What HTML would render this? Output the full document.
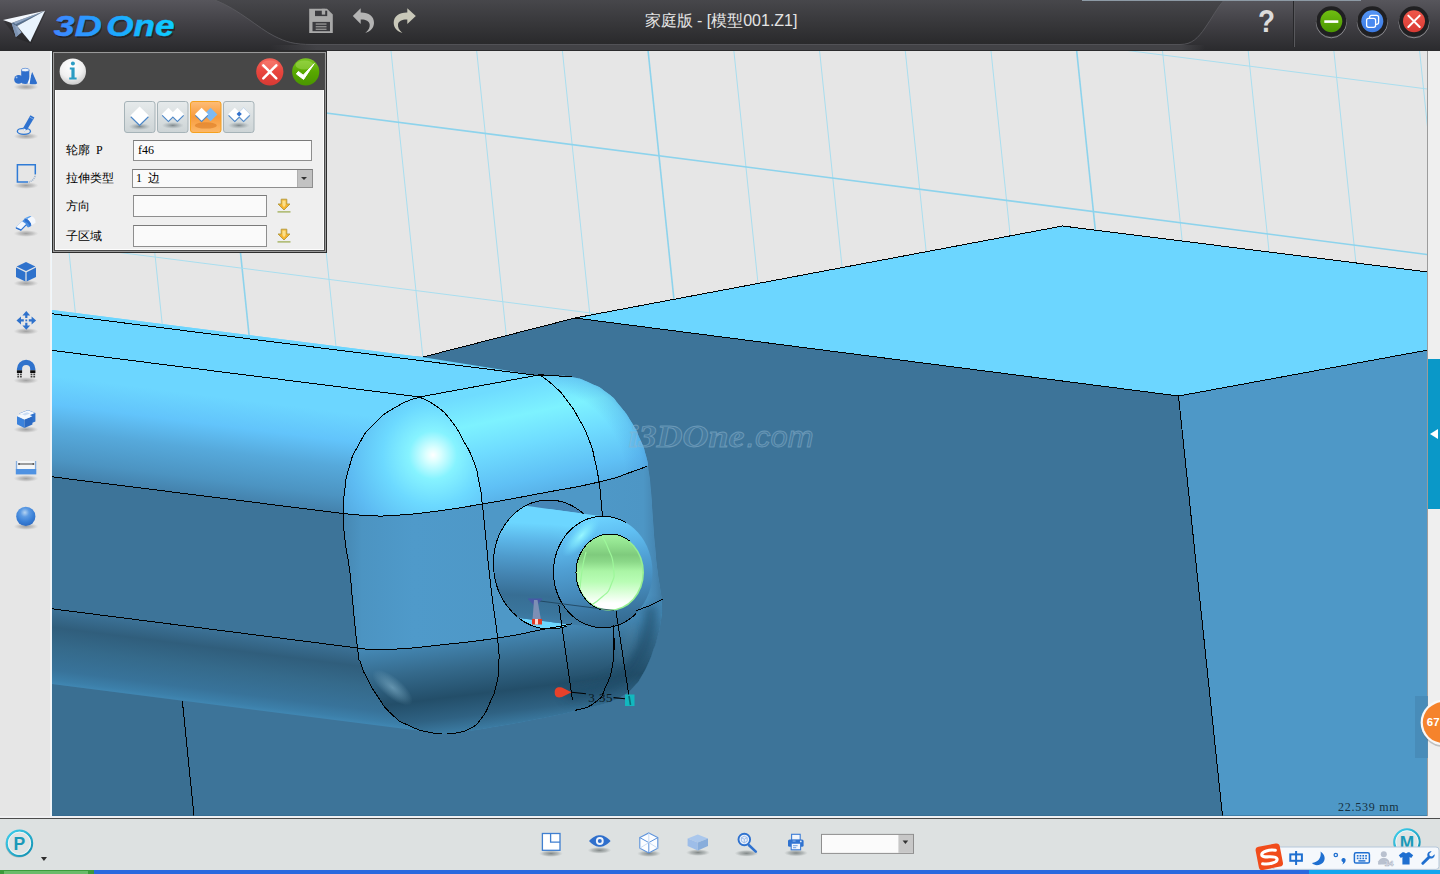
<!DOCTYPE html>
<html lang="zh">
<head>
<meta charset="utf-8">
<title>3D One</title>
<style>
*{box-sizing:border-box;margin:0;padding:0}
html,body{width:1440px;height:874px;overflow:hidden;background:#e6e6e6;font-family:"Liberation Sans",sans-serif;}
#app{position:relative;width:1440px;height:874px;overflow:hidden;background:#e6e6e6}
.abs{position:absolute}
#titlebar{position:absolute;left:0;top:0;width:1440px;height:51px}
#title{position:absolute;left:1px;top:10px;width:1440px;text-align:center;color:#e4e4e4;font-size:16px;line-height:22px;letter-spacing:0px}
#sidebar{position:absolute;left:0;top:51px;width:52px;height:766px;background:#e6e6e6}
#canvas{position:absolute;left:52px;top:51px;width:1375px;height:765px;background:#e6e6e6;overflow:hidden}
#rightstrip{position:absolute;left:1427px;top:51px;width:13px;height:767px;background:#efefef;border-left:1px solid #9c9c9c}
#bottombar{position:absolute;left:0;top:818px;width:1440px;height:52px;background:#dde1e1;border-top:1px solid #4c4c4c}
#botgap{position:absolute;left:0;top:816px;width:1428px;height:2px;background:#f0f0f2}
#taskbar{position:absolute;left:0;top:870px;width:1440px;height:4px;background:#2a69df}
/* panel */
#panel{position:absolute;left:55px;top:54px;width:269px;height:196px;background:#efefef;box-shadow:0 0 0 1px #4a4a4a,0 0 0 2px #9a9a9a,0 0 0 3px #2e2e2e,inset 0 0 0 1px #fdfdfd}
#panelhead{position:absolute;left:0;top:0;width:269px;height:36px;background:#474747}
#pin{position:absolute;left:1px;top:1px;width:268px;height:195px}
.lbl{position:absolute;left:10px;font-size:12px;color:#000;line-height:14px;font-family:"Liberation Serif",serif;word-spacing:3px;white-space:nowrap}
.inp{position:absolute;background:#fafafa;border:1px solid #8e8e8e;border-top-color:#7a7a7a;font-size:12px;line-height:18px;padding-left:4px;color:#000;font-family:"Liberation Serif",serif;word-spacing:3px;white-space:nowrap}
</style>
</head>
<body>
<div id="app">

<!-- ===================== 3D CANVAS ===================== -->
<div id="canvas">
<svg id="scene" width="1376" height="765" viewBox="52 51 1376 765">
<defs>
<linearGradient id="gBar" gradientUnits="userSpaceOnUse" x1="52" y1="350" x2="36" y2="477">
<stop offset="0" stop-color="#6cd6ff"/><stop offset=".2" stop-color="#6cd6ff"/><stop offset=".42" stop-color="#62c4fb"/><stop offset=".62" stop-color="#56a9db"/><stop offset=".85" stop-color="#4c94c2"/><stop offset="1" stop-color="#437fa9"/></linearGradient>
<linearGradient id="gBarLow" gradientUnits="userSpaceOnUse" x1="52" y1="609" x2="42.5" y2="684">
<stop offset="0" stop-color="#3c7297"/><stop offset=".24" stop-color="#305e7c"/><stop offset=".5" stop-color="#356a8b"/><stop offset=".8" stop-color="#38739a"/><stop offset=".93" stop-color="#3c7fa9"/><stop offset="1" stop-color="#4189b5"/></linearGradient>
<radialGradient id="gSph" gradientUnits="userSpaceOnUse" cx="433" cy="455" r="120">
<stop offset="0" stop-color="#ffffff"/><stop offset=".06" stop-color="#dcffff"/><stop offset=".2" stop-color="#86f3ff"/><stop offset=".42" stop-color="#6cd9ff"/><stop offset=".7" stop-color="#5dbbf2"/><stop offset="1" stop-color="#4f9fd6"/></radialGradient>
<linearGradient id="gCyl" gradientUnits="userSpaceOnUse" x1="520" y1="385" x2="545" y2="500">
<stop offset="0" stop-color="#6fdcff"/><stop offset=".25" stop-color="#7df2ff"/><stop offset=".5" stop-color="#6fdcff"/><stop offset=".8" stop-color="#5fc0f5"/><stop offset="1" stop-color="#55abe2"/></linearGradient>
<radialGradient id="gCor" gradientUnits="userSpaceOnUse" cx="560" cy="470" r="105">
<stop offset="0" stop-color="#6fdcff"/><stop offset=".55" stop-color="#69d2ff"/><stop offset=".8" stop-color="#5cb9ee"/><stop offset="1" stop-color="#4f9fd6"/></radialGradient>
<linearGradient id="gLowL" gradientUnits="userSpaceOnUse" x1="343" y1="0" x2="500" y2="0">
<stop offset="0" stop-color="#4687b2"/><stop offset=".12" stop-color="#4c94c2"/><stop offset=".45" stop-color="#4f9aca"/><stop offset="1" stop-color="#4e98c7"/></linearGradient>
<linearGradient id="gLowR" gradientUnits="userSpaceOnUse" x1="600" y1="0" x2="662" y2="0">
<stop offset="0" stop-color="#4e98c7"/><stop offset=".7" stop-color="#4d96c5"/><stop offset=".9" stop-color="#4686b2"/><stop offset="1" stop-color="#3f7aa2"/></linearGradient>
<linearGradient id="gBot" gradientUnits="userSpaceOnUse" x1="520" y1="632" x2="531" y2="722">
<stop offset="0" stop-color="#4487b3"/><stop offset=".3" stop-color="#356a8c"/><stop offset=".62" stop-color="#234e69"/><stop offset=".85" stop-color="#2f6283"/><stop offset="1" stop-color="#3b7aa1"/></linearGradient>
<linearGradient id="gBoss" gradientUnits="userSpaceOnUse" x1="560" y1="508" x2="548" y2="628">
<stop offset="0" stop-color="#6cd6ff"/><stop offset=".14" stop-color="#6cd6ff"/><stop offset=".28" stop-color="#5cb6e8"/><stop offset=".42" stop-color="#4f9ccd"/><stop offset=".58" stop-color="#4383b0"/><stop offset=".74" stop-color="#376e94"/><stop offset=".88" stop-color="#3a759c"/><stop offset="1" stop-color="#4282ae"/></linearGradient>
<linearGradient id="gRing" gradientUnits="userSpaceOnUse" x1="595" y1="516" x2="612" y2="628">
<stop offset="0" stop-color="#6ed4ff"/><stop offset=".18" stop-color="#60bff2"/><stop offset=".42" stop-color="#50a0d4"/><stop offset=".68" stop-color="#4488b8"/><stop offset=".88" stop-color="#39739c"/><stop offset="1" stop-color="#33688d"/></linearGradient>
<radialGradient id="gRingH" gradientUnits="userSpaceOnUse" cx="0" cy="0" r="1">
<stop offset="0" stop-color="#9afaff" stop-opacity=".95"/><stop offset=".5" stop-color="#7fe9ff" stop-opacity=".6"/><stop offset="1" stop-color="#6cd6ff" stop-opacity="0"/></radialGradient>
<linearGradient id="gGreen" gradientUnits="userSpaceOnUse" x1="0" y1="534" x2="0" y2="611">
<stop offset="0" stop-color="#a4f2a0"/><stop offset=".12" stop-color="#93e390"/><stop offset=".27" stop-color="#7fcb7d"/><stop offset=".36" stop-color="#8bd888"/><stop offset=".48" stop-color="#aaf5a5"/><stop offset=".62" stop-color="#b9fdb5"/><stop offset=".8" stop-color="#e6ffe4"/><stop offset=".9" stop-color="#ffffff"/><stop offset="1" stop-color="#ffffff"/></linearGradient>
<radialGradient id="gHl2" gradientUnits="userSpaceOnUse" cx="0" cy="0" r="1">
<stop offset="0" stop-color="#7aa9c2" stop-opacity=".7"/><stop offset="1" stop-color="#7fb0c8" stop-opacity="0"/></radialGradient>
<radialGradient id="gCorD" gradientUnits="userSpaceOnUse" cx="535" cy="478" r="122">
<stop offset="0" stop-color="#4a98da" stop-opacity="0"/><stop offset=".74" stop-color="#4a98da" stop-opacity="0"/><stop offset=".88" stop-color="#4a98da" stop-opacity=".3"/><stop offset="1" stop-color="#4690cc" stop-opacity=".8"/></radialGradient>
<filter id="bl1" x="-20%" y="-20%" width="140%" height="140%"><feGaussianBlur stdDeviation="1.2"/></filter>
<filter id="bl5" x="-50%" y="-50%" width="200%" height="200%"><feGaussianBlur stdDeviation="5"/></filter>
<filter id="bl3" x="-20%" y="-20%" width="140%" height="140%"><feGaussianBlur stdDeviation="3"/></filter>
</defs>
<rect x="52" y="51" width="1376" height="765" fill="#e6e6e6"/>
<g><line x1="48.1" y1="51" x2="86.5" y2="420" stroke="#a9deef" stroke-width="1"/><line x1="133.8" y1="51" x2="172.2" y2="420" stroke="#a9deef" stroke-width="1"/><line x1="219.5" y1="51" x2="257.9" y2="420" stroke="#8dd3ec" stroke-width="1.6"/><line x1="305.3" y1="51" x2="343.6" y2="420" stroke="#a9deef" stroke-width="1"/><line x1="391.0" y1="51" x2="429.4" y2="420" stroke="#a9deef" stroke-width="1"/><line x1="476.7" y1="51" x2="515.1" y2="420" stroke="#a9deef" stroke-width="1"/><line x1="562.4" y1="51" x2="600.8" y2="420" stroke="#a9deef" stroke-width="1"/><line x1="648.1" y1="51" x2="686.5" y2="420" stroke="#8dd3ec" stroke-width="1.6"/><line x1="733.9" y1="51" x2="772.2" y2="420" stroke="#a9deef" stroke-width="1"/><line x1="819.6" y1="51" x2="858.0" y2="420" stroke="#a9deef" stroke-width="1"/><line x1="905.3" y1="51" x2="943.7" y2="420" stroke="#a9deef" stroke-width="1"/><line x1="991.0" y1="51" x2="1029.4" y2="420" stroke="#a9deef" stroke-width="1"/><line x1="1076.7" y1="51" x2="1115.1" y2="420" stroke="#8dd3ec" stroke-width="1.6"/><line x1="1162.5" y1="51" x2="1200.8" y2="420" stroke="#a9deef" stroke-width="1"/><line x1="1248.2" y1="51" x2="1286.6" y2="420" stroke="#a9deef" stroke-width="1"/><line x1="1333.9" y1="51" x2="1372.3" y2="420" stroke="#a9deef" stroke-width="1"/><line x1="1419.6" y1="51" x2="1458.0" y2="420" stroke="#a9deef" stroke-width="1"/><line x1="52" y1="-87.7" x2="1428" y2="89.1" stroke="#a9deef" stroke-width="1"/><line x1="52" y1="77.8" x2="1428" y2="254.6" stroke="#8dd3ec" stroke-width="1.6"/><line x1="52" y1="243.8" x2="1428" y2="420.6" stroke="#a9deef" stroke-width="1"/></g>
<polygon points="575.0,318.0 1062.5,226.0 1428.0,272.0 1428.0,350.0 1178.5,396.0" fill="#6cd6ff"/>
<polygon points="423.0,357.0 575.0,318.0 1178.5,396.0 1222.5,816.0 52.0,816.0 52.0,330.0" fill="#3d7499"/>
<polygon points="1178.5,396.0 1428.0,350.0 1428.0,816.0 1222.5,816.0" fill="#4e98c7"/>
<polygon points="52,684 182.4,701 194,816 52,816" fill="#3a6f92"/>
<polygon points="52.0,310.0 423.0,357.3 537.0,375.4 540.0,375.0 419.4,397.0 52.0,350.4" fill="#6cd6ff"/>
<path d="M52,350.4 L419.4,397 C411.6,400.3 411.1,398.0 396.0,407.0 C380.9,416.0 386.7,411.0 374.0,424.0 C361.3,437.0 366.3,431.3 358.0,446.0 C349.7,460.7 353.4,453.3 349.0,468.0 C344.6,482.7 346.6,474.8 344.8,490.0 C343.0,505.2 343.9,505.7 343.5,513.6 L52,476.8 Z" fill="url(#gBar)"/>
<path d="M52,476.8 L343.5,513.6 C344.0,522.4 343.0,521.2 345.0,540.0 C347.0,558.8 347.1,550.0 349.6,570.0 C352.1,590.0 349.9,574.0 352.5,600.0 C355.1,626.0 355.8,632.0 357.5,648.0 L52,608.8 Z" fill="#3d7499"/>
<path d="M52,608.8 L357.5,648 C358.7,653.3 357.7,653.7 361.0,664.0 C364.3,674.3 361.8,668.0 367.5,679.0 C373.2,690.0 369.7,685.0 378.0,697.0 C386.3,709.0 381.8,705.3 392.5,715.0 C403.2,724.7 398.2,720.3 410.0,726.0 C421.8,731.7 417.5,729.5 428.0,732.0 C438.5,734.5 437.0,733.1 441.5,733.6 L52,684.0 Z" fill="url(#gBarLow)"/>
<clipPath id="capclip"><path d="M419.4,397.0 C411.6,400.3 411.1,398.0 396.0,407.0 C380.9,416.0 386.7,411.0 374.0,424.0 C361.3,437.0 366.3,431.3 358.0,446.0 C349.7,460.7 353.4,453.3 349.0,468.0 C344.6,482.7 346.6,474.8 344.8,490.0 C343.0,505.2 343.4,496.9 343.5,513.6 C343.6,530.3 343.0,521.2 345.0,540.0 C347.0,558.8 347.1,550.0 349.6,570.0 C352.1,590.0 349.9,574.0 352.5,600.0 C355.1,626.0 354.7,626.7 357.5,648.0 C360.3,669.3 357.7,653.7 361.0,664.0 C364.3,674.3 361.8,668.0 367.5,679.0 C373.2,690.0 369.7,685.0 378.0,697.0 C386.3,709.0 381.8,705.3 392.5,715.0 C403.2,724.7 398.2,720.3 410.0,726.0 C421.8,731.7 417.5,729.5 428.0,732.0 C438.5,734.5 437.0,733.1 441.5,733.6 C447.7,733.1 449.5,733.1 460.0,732.0 C470.5,730.9 463.0,731.8 473.0,730.4 C483.0,729.0 477.7,729.7 490.0,727.7 C502.3,725.7 496.7,726.7 510.0,724.3 C523.3,721.9 515.7,723.3 530.0,720.5 C544.3,717.7 537.7,719.2 553.0,716.0 C568.3,712.8 560.3,714.5 576.0,710.8 C591.7,707.1 588.3,708.1 600.0,705.0 C611.7,701.9 603.2,704.7 611.0,701.5 C618.8,698.3 615.6,700.5 623.3,695.5 C631.0,690.5 627.8,693.2 634.0,686.5 C640.2,679.8 636.9,683.9 642.0,675.4 C647.1,666.9 645.6,669.1 649.3,661.0 C653.0,652.9 650.5,658.0 653.0,651.0 C655.5,644.0 654.2,649.7 656.8,640.0 C659.4,630.3 659.1,633.8 660.8,622.0 C662.5,610.2 662.1,615.2 662.0,604.5 C661.9,593.8 662.0,601.5 660.5,590.0 C659.0,578.5 659.3,585.0 657.5,570.0 C655.7,555.0 656.5,561.7 655.0,545.0 C653.5,528.3 654.3,538.0 653.0,520.0 C651.7,502.0 652.3,506.7 651.0,491.0 C649.7,475.3 650.7,484.8 649.0,473.0 C647.3,461.2 649.0,467.0 646.0,455.7 C643.0,444.4 644.7,449.9 640.0,439.0 C635.3,428.1 638.7,434.0 632.0,423.0 C625.3,412.0 628.3,416.1 620.0,406.0 C611.7,395.9 617.0,400.5 607.0,392.8 C597.0,385.1 601.8,388.3 590.0,383.0 C578.2,377.7 583.4,379.4 571.7,377.0 C560.0,374.6 566.6,376.3 555.0,375.8 C543.4,375.3 543.0,375.5 537.0,375.4 L540,375 L419.4,397 Z"/></clipPath>
<g clip-path="url(#capclip)">
<path d="M419.4,397.0 C411.6,400.3 411.1,398.0 396.0,407.0 C380.9,416.0 386.7,411.0 374.0,424.0 C361.3,437.0 366.3,431.3 358.0,446.0 C349.7,460.7 353.4,453.3 349.0,468.0 C344.6,482.7 346.6,474.8 344.8,490.0 C343.0,505.2 343.4,496.9 343.5,513.6 C343.6,530.3 343.0,521.2 345.0,540.0 C347.0,558.8 347.1,550.0 349.6,570.0 C352.1,590.0 349.9,574.0 352.5,600.0 C355.1,626.0 354.7,626.7 357.5,648.0 C360.3,669.3 357.7,653.7 361.0,664.0 C364.3,674.3 361.8,668.0 367.5,679.0 C373.2,690.0 369.7,685.0 378.0,697.0 C386.3,709.0 381.8,705.3 392.5,715.0 C403.2,724.7 398.2,720.3 410.0,726.0 C421.8,731.7 417.5,729.5 428.0,732.0 C438.5,734.5 437.0,733.1 441.5,733.6 C447.7,733.1 449.5,733.1 460.0,732.0 C470.5,730.9 463.0,731.8 473.0,730.4 C483.0,729.0 477.7,729.7 490.0,727.7 C502.3,725.7 496.7,726.7 510.0,724.3 C523.3,721.9 515.7,723.3 530.0,720.5 C544.3,717.7 537.7,719.2 553.0,716.0 C568.3,712.8 560.3,714.5 576.0,710.8 C591.7,707.1 588.3,708.1 600.0,705.0 C611.7,701.9 603.2,704.7 611.0,701.5 C618.8,698.3 615.6,700.5 623.3,695.5 C631.0,690.5 627.8,693.2 634.0,686.5 C640.2,679.8 636.9,683.9 642.0,675.4 C647.1,666.9 645.6,669.1 649.3,661.0 C653.0,652.9 650.5,658.0 653.0,651.0 C655.5,644.0 654.2,649.7 656.8,640.0 C659.4,630.3 659.1,633.8 660.8,622.0 C662.5,610.2 662.1,615.2 662.0,604.5 C661.9,593.8 662.0,601.5 660.5,590.0 C659.0,578.5 659.3,585.0 657.5,570.0 C655.7,555.0 656.5,561.7 655.0,545.0 C653.5,528.3 654.3,538.0 653.0,520.0 C651.7,502.0 652.3,506.7 651.0,491.0 C649.7,475.3 650.7,484.8 649.0,473.0 C647.3,461.2 649.0,467.0 646.0,455.7 C643.0,444.4 644.7,449.9 640.0,439.0 C635.3,428.1 638.7,434.0 632.0,423.0 C625.3,412.0 628.3,416.1 620.0,406.0 C611.7,395.9 617.0,400.5 607.0,392.8 C597.0,385.1 601.8,388.3 590.0,383.0 C578.2,377.7 583.4,379.4 571.7,377.0 C560.0,374.6 566.6,376.3 555.0,375.8 C543.4,375.3 543.0,375.5 537.0,375.4 L540,375 L419.4,397 Z" fill="#4e98c7"/>
<path d="M419.4,397.0 C411.6,400.3 411.1,398.0 396.0,407.0 C380.9,416.0 386.7,411.0 374.0,424.0 C361.3,437.0 366.3,431.3 358.0,446.0 C349.7,460.7 353.4,453.3 349.0,468.0 C344.6,482.7 346.6,474.8 344.8,490.0 C343.0,505.2 343.9,505.7 343.5,513.6 C352.3,514.3 353.5,515.0 370.0,515.6 C386.5,516.2 373.0,516.6 393.0,515.4 C413.0,514.2 400.2,515.8 430.0,512.0 C459.8,508.2 464.9,506.7 482.3,504.0 C481.2,496.7 481.9,496.3 479.0,482.0 C476.1,467.7 478.8,475.0 473.5,461.0 C468.2,447.0 470.5,453.5 463.0,440.0 C455.5,426.5 460.0,431.8 451.0,420.5 C442.0,409.2 446.5,413.8 436.0,406.0 C425.5,398.2 424.9,400.0 419.4,397.0 Z" fill="url(#gSph)"/>
<path d="M419.4,397.0 C424.9,400.0 425.5,398.2 436.0,406.0 C446.5,413.8 442.0,409.2 451.0,420.5 C460.0,431.8 455.5,426.5 463.0,440.0 C470.5,453.5 468.2,447.0 473.5,461.0 C478.8,475.0 476.1,467.7 479.0,482.0 C481.9,496.3 481.2,496.7 482.3,504.0 C501.5,500.5 501.1,500.8 540.0,493.5 C578.9,486.2 579.3,485.8 599.0,482.0 C597.7,475.0 598.2,474.8 595.0,461.0 C591.8,447.2 594.6,454.6 589.3,440.6 C584.0,426.6 586.5,432.5 579.0,419.0 C571.5,405.5 575.0,411.0 566.7,400.0 C558.4,389.0 562.9,394.3 554.0,386.0 C545.1,377.7 544.7,378.7 540.0,375.0 L419.4,397 Z" fill="url(#gCyl)"/>
<path d="M540.0,375.0 C544.7,378.7 545.1,377.7 554.0,386.0 C562.9,394.3 558.4,389.0 566.7,400.0 C575.0,411.0 571.5,405.5 579.0,419.0 C586.5,432.5 584.0,426.6 589.3,440.6 C594.6,454.6 591.8,447.2 595.0,461.0 C598.2,474.8 597.7,475.0 599.0,482.0 C609.3,478.8 614.0,477.8 630.0,472.5 C646.0,467.2 641.3,468.2 647.0,466.0 L670,460 L670,370 L537,370 Z" fill="url(#gCyl)"/>
<path d="M540.0,375.0 C544.7,378.7 545.1,377.7 554.0,386.0 C562.9,394.3 558.4,389.0 566.7,400.0 C575.0,411.0 571.5,405.5 579.0,419.0 C586.5,432.5 584.0,426.6 589.3,440.6 C594.6,454.6 591.8,447.2 595.0,461.0 C598.2,474.8 597.7,475.0 599.0,482.0 C609.3,478.8 614.0,477.8 630.0,472.5 C646.0,467.2 641.3,468.2 647.0,466.0 L670,460 L670,370 L537,370 Z" fill="url(#gCorD)"/>
<path d="M343.5,513.6 C352.3,514.3 353.5,515.0 370.0,515.6 C386.5,516.2 373.0,516.6 393.0,515.4 C413.0,514.2 400.2,515.8 430.0,512.0 C459.8,508.2 464.9,506.7 482.3,504.0 C483.5,516.0 483.8,518.0 486.0,540.0 C488.2,562.0 486.8,550.0 489.0,570.0 C491.2,590.0 489.7,577.3 492.5,600.0 C495.3,622.7 495.8,625.3 497.5,638.0 C478.3,640.3 473.3,641.3 440.0,645.0 C406.7,648.7 419.2,647.5 397.5,649.0 C375.8,650.5 388.3,649.9 375.0,649.6 C361.7,649.3 363.3,648.5 357.5,648.0 C355.8,632.0 355.1,626.0 352.5,600.0 C349.9,574.0 352.1,590.0 349.6,570.0 C347.1,550.0 347.0,558.8 345.0,540.0 C343.0,521.2 344.0,522.4 343.5,513.6 Z" fill="url(#gLowL)"/>
<path d="M599,482 C609.3,478.8 614.0,477.8 630.0,472.5 C646.0,467.2 641.3,468.2 647.0,466.0 L670,460 L670,612 L636,611 L620,560 Z" fill="url(#gLowR)"/>
<path d="M357.5,648.0 C363.3,648.5 361.7,649.3 375.0,649.6 C388.3,649.9 375.8,650.5 397.5,649.0 C419.2,647.5 406.7,648.7 440.0,645.0 C473.3,641.3 464.2,643.0 497.5,638.0 C530.8,633.0 515.0,634.8 540.0,630.0 C565.0,625.2 561.7,625.8 572.5,623.8 L590,627 L636.3,610.7 L662.6,599 L680,600 L680,760 L340,760 L340,640 Z" fill="url(#gBot)"/>
<path d="M651.0,612.0 C650.0,618.7 651.3,618.7 648.0,632.0 C644.7,645.3 647.0,639.7 641.0,652.0 C635.0,664.3 639.0,659.0 630.0,669.0 C621.0,679.0 626.0,675.0 614.0,682.0 C602.0,689.0 608.7,686.0 594.0,690.0 C579.3,694.0 578.0,692.7 570.0,694.0" fill="none" stroke="#1f4965" stroke-width="13" stroke-linecap="round" opacity=".6" filter="url(#bl5)"/>
<path d="M632.0,628.0 C631.0,633.7 632.7,634.3 629.0,645.0 C625.3,655.7 623.7,655.0 621.0,660.0" fill="none" stroke="#5a8aa8" stroke-width="7" stroke-linecap="round" opacity=".35" filter="url(#bl5)"/>
<ellipse cx="0" cy="0" rx="1" ry="1" transform="translate(392.5,687.5) rotate(40) scale(25,10)" fill="url(#gHl2)"/>
</g>
<clipPath id="holeclip"><ellipse cx="549.5" cy="564.5" rx="56" ry="64.5" transform="rotate(-3 549.5 564.5)"/></clipPath>
<g clip-path="url(#holeclip)">
<rect x="490" y="495" width="120" height="140" fill="#4585b6"/>
<polygon points="480,640 600,640 600,628.2 516.7,617.7 480,613" fill="#6cd6ff"/>
</g>
<clipPath id="bodyclip"><polygon points="529.3,506.3 604,516.6 604,628.6 516.7,617.7 480,613 480,500"/></clipPath>
<g clip-path="url(#bodyclip)"><ellipse cx="549.5" cy="564.5" rx="56" ry="64.5" transform="rotate(-3 549.5 564.5)" fill="url(#gBoss)"/><rect x="549" y="500" width="60" height="135" fill="url(#gBoss)"/></g>
<clipPath id="nobody"><path clip-rule="evenodd" d="M400,400 H700 V700 H400 Z M529.3,506.3 L660,524.5 L660,640 L516.7,617.7 Z"/></clipPath>
<ellipse cx="603" cy="572" rx="49.5" ry="55.8" fill="url(#gRing)"/>
<clipPath id="ringclip"><ellipse cx="603" cy="572" rx="49.5" ry="55.8"/></clipPath>
<g clip-path="url(#ringclip)"><ellipse cx="0" cy="0" rx="1" ry="1" transform="translate(581.5,535.5) rotate(-48) scale(27,10)" fill="url(#gRingH)"/></g>
<ellipse cx="610" cy="572.5" rx="34" ry="38.5" fill="#95ee92"/>
<ellipse cx="609.6" cy="572.3" rx="32.8" ry="37.3" fill="url(#gGreen)"/>
<clipPath id="grclip"><ellipse cx="609.6" cy="572.3" rx="32.8" ry="37.3"/></clipPath>
<g clip-path="url(#grclip)" fill="none" stroke="#9df79a" stroke-width="1.2">
<path d="M601.0,535.0 C603.3,539.3 603.8,537.3 608.0,548.0 C612.2,558.7 612.5,554.7 613.5,567.0 C614.5,579.3 614.8,575.0 611.0,585.0 C607.2,595.0 609.7,589.7 602.0,597.0 C594.3,604.3 592.7,603.7 588.0,607.0"/>
<path d="M586.0,552.0 C584.8,557.3 584.5,556.0 582.5,568.0 C580.5,580.0 580.8,581.3 580.0,588.0"/>
</g>
<g fill="none" stroke="#000" stroke-width="1" shape-rendering="crispEdges"><polyline points="423.0,357.0 575.0,318.0 1062.5,226.0 1428.0,272.0"/><polyline points="575.0,318.0 1178.5,396.0 1428.0,350.0"/><polyline points="1178.5,396.0 1222.5,816.0"/><polyline points="182.4,701.4 194.0,816.0"/><polyline points="52.0,313.8 537.0,375.4"/><polyline points="52.0,350.4 419.4,397.0 544.0,374.0"/><polyline points="52.0,476.8 343.5,513.6"/><polyline points="52.0,608.8 357.5,648.0"/><path d="M419.4,397.0 C411.6,400.3 411.1,398.0 396.0,407.0 C380.9,416.0 386.7,411.0 374.0,424.0 C361.3,437.0 366.3,431.3 358.0,446.0 C349.7,460.7 353.4,453.3 349.0,468.0 C344.6,482.7 346.6,474.8 344.8,490.0 C343.0,505.2 343.4,496.9 343.5,513.6 C343.6,530.3 343.0,521.2 345.0,540.0 C347.0,558.8 347.1,550.0 349.6,570.0 C352.1,590.0 349.9,574.0 352.5,600.0 C355.1,626.0 354.7,626.7 357.5,648.0 C360.3,669.3 357.7,653.7 361.0,664.0 C364.3,674.3 361.8,668.0 367.5,679.0 C373.2,690.0 369.7,685.0 378.0,697.0 C386.3,709.0 381.8,705.3 392.5,715.0 C403.2,724.7 398.2,720.3 410.0,726.0 C421.8,731.7 417.5,729.5 428.0,732.0 C438.5,734.5 437.0,733.1 441.5,733.6"/><path d="M419.4,397.0 C424.9,400.0 425.5,398.2 436.0,406.0 C446.5,413.8 442.0,409.2 451.0,420.5 C460.0,431.8 455.5,426.5 463.0,440.0 C470.5,453.5 468.2,447.0 473.5,461.0 C478.8,475.0 476.1,467.7 479.0,482.0 C481.9,496.3 480.0,484.7 482.3,504.0 C484.6,523.3 483.8,518.0 486.0,540.0 C488.2,562.0 486.8,550.0 489.0,570.0 C491.2,590.0 489.7,577.3 492.5,600.0 C495.3,622.7 495.4,616.3 497.5,638.0 C499.6,659.7 499.2,649.0 498.8,665.0 C498.2,681.0 498.9,673.5 496.0,686.0 C493.1,698.5 495.0,691.5 490.0,702.5 C485.0,713.5 487.7,710.3 481.0,719.0 C474.3,727.7 477.7,724.0 470.0,728.5 C462.3,733.0 465.7,730.9 458.0,732.6 C450.3,734.3 450.7,733.3 447.0,733.7"/><path d="M540.0,375.0 C544.7,378.7 545.1,377.7 554.0,386.0 C562.9,394.3 558.4,389.0 566.7,400.0 C575.0,411.0 571.5,405.5 579.0,419.0 C586.5,432.5 584.0,426.6 589.3,440.6 C594.6,454.6 591.8,447.2 595.0,461.0 C598.2,474.8 597.0,469.0 599.0,482.0 C601.0,495.0 599.9,488.7 601.0,500.0 C602.1,511.3 601.9,510.7 602.4,516.0"/><path d="M343.5,513.6 C352.3,514.3 353.5,515.0 370.0,515.6 C386.5,516.2 373.0,516.6 393.0,515.4 C413.0,514.2 400.2,515.8 430.0,512.0 C459.8,508.2 445.6,510.2 482.3,504.0 C519.0,497.8 501.1,500.8 540.0,493.5 C578.9,486.2 569.0,489.0 599.0,482.0 C629.0,475.0 614.0,477.8 630.0,472.5 C646.0,467.2 641.3,468.2 647.0,466.0"/><path d="M357.5,648.0 C363.3,648.5 361.7,649.3 375.0,649.6 C388.3,649.9 375.8,650.5 397.5,649.0 C419.2,647.5 406.7,648.7 440.0,645.0 C473.3,641.3 464.2,643.0 497.5,638.0 C530.8,633.0 515.0,634.8 540.0,630.0 C565.0,625.2 561.7,625.8 572.5,623.8"/><path d="M537.0,375.4 C543.0,375.5 543.4,375.3 555.0,375.8 C566.6,376.3 566.1,376.6 571.7,377.0"/><polyline points="636.3,610.7 650.0,605.5 662.6,599.0"/><g clip-path="url(#nobody)"><ellipse cx="549.5" cy="564.5" rx="56" ry="64.5" transform="rotate(-3 549.5 564.5)"/></g><path d="M626.24,522.73 L623.00,520.96 L619.66,519.46 L616.23,518.23 L612.73,517.29 L609.18,516.64 L605.59,516.28 L601.99,516.21 L598.40,516.44 L594.83,516.97 L591.30,517.78 L587.84,518.88 L584.46,520.26 L581.17,521.92 L578.00,523.84 L574.96,526.01 L572.07,528.43 L569.35,531.08 L566.80,533.94 L564.44,537.01 L562.29,540.26 L560.35,543.68 L558.64,547.25 L557.16,550.95 L555.92,554.76 L554.94,558.66 L554.20,562.63 L553.73,566.65 L553.51,570.70 L553.56,574.76 L553.87,578.80 L554.44,582.81 L555.26,586.76 L556.34,590.63 L557.66,594.40 L559.23,598.05 L561.02,601.57 L563.04,604.93 L565.27,608.12 L567.69,611.11 L570.31,613.90 L573.10,616.47 L576.04,618.80 L579.13,620.88 L582.34,622.71 L585.66,624.27 L589.08,625.55 L592.57,626.55 L596.11,627.26 L599.69,627.68 L603.29,627.80 L606.88,627.63 L610.46,627.16 L613.99,626.41 L617.47,625.36 L620.87,624.04 L624.18,622.43 L627.37,620.57 L630.44,618.44 L633.36,616.07 L636.12,613.47"/><path d="M629.50,540.96 L627.00,539.16 L624.37,537.61 L621.63,536.32 L618.80,535.31 L615.90,534.58 L612.96,534.15 L610.00,534.00 L607.04,534.15 L604.10,534.58 L601.20,535.31 L598.37,536.32 L595.63,537.61 L593.00,539.16 L590.50,540.96 L588.15,543.01 L585.96,545.28 L583.95,547.75 L582.15,550.42 L580.56,553.25 L579.19,556.23 L578.05,559.33 L577.16,562.54 L576.52,565.81 L576.13,569.14 L576.00,572.50 L576.13,575.86 L576.52,579.19 L577.16,582.46 L578.05,585.67 L579.19,588.77 L580.56,591.75 L582.15,594.58 L583.95,597.25 L585.96,599.72 L588.15,601.99 L590.50,604.04 L593.00,605.84 L595.63,607.39 L598.37,608.68 L601.20,609.69"/><polyline points="558.8,605.0 572.5,700.0"/><polyline points="616.0,611.0 628.8,695.0 631.0,703.0"/><polyline points="613.0,625.0 615.0,650.0"/><path d="M613.8,625.0 C613.7,631.7 613.9,631.7 613.5,645.0 C613.1,658.3 615.0,651.3 612.5,665.0 C610.0,678.7 611.8,673.5 606.0,686.0 C600.2,698.5 605.3,694.3 595.0,702.5 C584.7,710.7 581.7,707.8 575.0,710.5"/></g>
<polygon points="52,310 423,357.2 423,358.6 52,312.6" fill="#6cd6ff"/>
<line x1="536" y1="600.5" x2="614" y2="610.5" stroke="#1d3f57" stroke-width="1" opacity=".8"/>
<polygon points="527.5,598.5 542.5,598.5 535.5,607" fill="#4a55a8" opacity=".85"/>
<polygon points="534,600 537.5,600 541,620 532.5,620" fill="#7d8fb5"/>
<rect x="532" y="619" width="10" height="5.5" fill="#e33a24"/><rect x="535" y="619" width="3" height="5.5" fill="#ffd9d2"/>
<path d="M571.5,692.3 L562,687.6 C556,686 554.6,689.5 554.7,692.3 C554.6,695.5 556,698.6 562,697 Z" fill="#e8412a"/>
<path d="M571.5,692.3 L586,693.8 M613.5,697.6 L625,698.8" stroke="#000" stroke-width="1.1" fill="none"/>
<text x="588.3" y="701.8" font-family="Liberation Serif,serif" font-size="13" fill="#0b1820" letter-spacing=".5">3.35</text>
<rect x="625" y="694.5" width="9.5" height="11.5" fill="#12b8bf"/><path d="M629,696 L630.5,705" stroke="#0a6f78" stroke-width="1.6"/>
<g font-style="italic" font-size="31" stroke-width=".9"><g fill="#7fa9c6" fill-opacity=".16" stroke="#8db5cf" stroke-opacity=".55"><text x="628.5" y="447" font-family="Liberation Serif,serif" font-weight="bold" textLength="116" lengthAdjust="spacingAndGlyphs">i3DOne</text><text x="746.5" y="447" font-family="Liberation Sans,sans-serif" font-size="29" textLength="67" lengthAdjust="spacingAndGlyphs">.com</text></g></g>
<text x="1338" y="811" font-family="Liberation Serif,serif" font-size="12" fill="#17303f" letter-spacing=".75">22.539 mm</text>
<rect x="52" y="815" width="1376" height="1" fill="#2f668b" opacity=".5"/>
</svg>
</div>

<!-- ===================== TITLE BAR ===================== -->
<div id="titlebar">
<svg width="1440" height="51" viewBox="0 0 1440 51" style="position:absolute;left:0;top:0">
<defs>
<linearGradient id="tbL" x1="0" y1="0" x2="0" y2="1"><stop offset="0" stop-color="#57565c"/><stop offset=".45" stop-color="#424146"/><stop offset="1" stop-color="#2a2a2d"/></linearGradient>
<linearGradient id="tbC" x1="0" y1="0" x2="0" y2="1"><stop offset="0" stop-color="#47474b"/><stop offset=".5" stop-color="#38383b"/><stop offset="1" stop-color="#29292b"/></linearGradient>
<linearGradient id="lg3d" gradientUnits="userSpaceOnUse" x1="53" y1="0" x2="176" y2="0"><stop offset="0" stop-color="#3f86ff"/><stop offset=".45" stop-color="#1fa4ff"/><stop offset="1" stop-color="#0ccfff"/></linearGradient>
<linearGradient id="btG" x1="0" y1="0" x2="0" y2="1"><stop offset="0" stop-color="#6fbe12"/><stop offset="1" stop-color="#4b9600"/></linearGradient>
<linearGradient id="btB" x1="0" y1="0" x2="0" y2="1"><stop offset="0" stop-color="#5596f5"/><stop offset="1" stop-color="#3a79e3"/></linearGradient>
<linearGradient id="btR" x1="0" y1="0" x2="0" y2="1"><stop offset="0" stop-color="#f0574b"/><stop offset="1" stop-color="#d93a33"/></linearGradient>
<linearGradient id="tbBand" gradientUnits="userSpaceOnUse" x1="270" y1="0" x2="1205" y2="0"><stop offset="0" stop-color="#424246" stop-opacity="0"/><stop offset=".05" stop-color="#424246" stop-opacity="1"/><stop offset=".975" stop-color="#424246" stop-opacity="1"/><stop offset="1" stop-color="#424246" stop-opacity="0"/></linearGradient>
</defs>
<!-- base (raised) -->
<rect x="0" y="0" width="1440" height="51" fill="url(#tbL)"/>
<!-- centre inset -->
<path d="M215,0 C240,10 258,28 274,36 C286,42 294,44.5 312,44.5 L1180,44.5 C1192,44.5 1198,38 1205,28 C1212,18 1217,8 1224,0 Z" fill="url(#tbC)"/>
<path d="M215,0 C240,10 258,28 274,36 C286,42 294,44.5 312,44.5 L1180,44.5 C1192,44.5 1198,38 1205,28 C1212,18 1217,8 1224,0" fill="none" stroke="#5b5b60" stroke-width="1" opacity=".8"/>
<rect x="270" y="45" width="935" height="6" fill="url(#tbBand)"/>
<rect x="0" y="50" width="1440" height="1" fill="#2b2b2d"/>
<rect x="1082" y="0" width="279" height="1" fill="#8d9aa5"/>
<!-- logo plane -->
<g>
<polygon points="4,21.4 46,11.8 31.2,43.4 16.9,38.2" fill="#111" opacity=".28"/>
<polygon points="11.6,22.9 17.1,25.9 21.6,32.4 15.9,37" fill="#8fa5c2"/>
<polygon points="11.6,22.9 14.4,24.4 18.6,34.8 15.9,37" fill="#7d93b2"/>
<polygon points="11.6,22.9 45,10.8 17.1,25.9" fill="#56708f"/>
<polygon points="13.5,22.6 45,10.8 15.6,24.2" fill="#8ea4c0"/>
<polygon points="3,20.1 45,10.8 11.6,22.9" fill="#f4f9ff"/>
<polygon points="17.1,25.9 45,10.8 30.2,42" fill="#e9f4fe"/>
</g>
<!-- 3D One -->
<g font-family="Liberation Sans,sans-serif" font-weight="bold" font-style="italic" font-size="29.5">
<g fill="#17171a" opacity=".55"><text x="55" y="38" textLength="48" lengthAdjust="spacingAndGlyphs">3D</text><text x="107.5" y="38" textLength="68.5" lengthAdjust="spacingAndGlyphs">One</text></g>
<g fill="url(#lg3d)" stroke="url(#lg3d)" stroke-width=".5"><text x="53.8" y="36.1" textLength="48" lengthAdjust="spacingAndGlyphs">3D</text><text x="106.2" y="36.1" textLength="68.3" lengthAdjust="spacingAndGlyphs">One</text></g>
</g>
<!-- save -->
<g>
<path d="M309.2,8.8 H327 L332.8,14.6 V33 H309.2 Z" fill="#a9a9a9"/>
<rect x="315" y="10.7" width="12.2" height="5.4" fill="#3b3b3f"/>
<rect x="321.8" y="8.8" width="3.4" height="5.8" fill="#a9a9a9"/>
<rect x="312.5" y="21.9" width="17.5" height="9.3" fill="#3b3b3f"/>
<rect x="315.7" y="23.3" width="10.8" height="1.5" fill="#8d8d8d"/><rect x="315.7" y="26" width="10.8" height="1.4" fill="#8d8d8d"/><rect x="315.7" y="28.6" width="10.8" height="1.4" fill="#8d8d8d"/>
</g>
<!-- undo -->
<path d="M352.8,16 L360.7,8.2 V12.6 C368.5,12.4 374.2,16.5 374,23 C373.8,28 370.5,31.3 365.3,33 C368.8,30 370,27.5 369.7,24.6 C369.2,21 365.5,19.4 360.7,19.6 V23.9 Z" fill="#b4b4b4"/>
<!-- redo -->
<path d="M415.8,16 L407.3,8.2 V12.6 C399.5,12.4 393.5,16.5 393.7,23 C393.9,28 397.2,31.3 402.4,33 C398.9,30 397.7,27.5 398,24.6 C398.5,21 402.5,19.4 407.3,19.6 V23.9 Z" fill="#c9c8b9"/>
<!-- help -->
<text x="1258" y="32" font-family="Liberation Sans,sans-serif" font-weight="bold" font-size="31" fill="#dcdcdc" textLength="17" lengthAdjust="spacingAndGlyphs">?</text>
<rect x="1293" y="1" width="1" height="46" fill="#27272a"/><rect x="1294" y="1" width="1" height="46" fill="#58585c"/>
<!-- window buttons -->
<g>
<circle cx="1331.3" cy="22.8" r="15" fill="none" stroke="#9c9ca0" stroke-width="1" opacity=".8"/>
<circle cx="1331.3" cy="21.3" r="15" fill="#202022"/>
<circle cx="1331.3" cy="21.3" r="11" fill="url(#btG)"/>
<rect x="1324.3" y="20.3" width="14" height="2.6" fill="#fff"/>
<circle cx="1372.3" cy="22.8" r="15" fill="none" stroke="#9c9ca0" stroke-width="1" opacity=".8"/>
<circle cx="1372.3" cy="21.3" r="15" fill="#202022"/>
<circle cx="1372.3" cy="21.3" r="11" fill="url(#btB)"/>
<g fill="none" stroke="#fff" stroke-width="1.3"><rect x="1369.6" y="15.3" width="9" height="9" rx="2"/><rect x="1366.6" y="18.3" width="9" height="9" rx="2" fill="#4a8af0"/></g>
<circle cx="1414" cy="22.8" r="15" fill="none" stroke="#9c9ca0" stroke-width="1" opacity=".8"/>
<circle cx="1414" cy="21.3" r="15" fill="#202022"/>
<circle cx="1414" cy="21.3" r="11" fill="url(#btR)"/>
<path d="M1408.3,15.6 L1419.7,27 M1419.7,15.6 L1408.3,27" stroke="#fff" stroke-width="2" stroke-linecap="round"/>
</g>

</svg>
<div id="title">家庭版 - [模型001.Z1]</div>
</div>

<!-- ===================== LEFT SIDEBAR ===================== -->
<div id="sidebar">
<svg width="52" height="766" viewBox="0 51 52 766" style="position:absolute;left:0;top:0">
<defs>
<radialGradient id="shd" cx=".5" cy=".5" r=".5"><stop offset="0" stop-color="#8a8a8a" stop-opacity=".75"/><stop offset=".55" stop-color="#9a9a9a" stop-opacity=".45"/><stop offset="1" stop-color="#b0b0b0" stop-opacity="0"/></radialGradient>
<radialGradient id="sph10" cx=".45" cy=".3" r=".75"><stop offset="0" stop-color="#b4d3f2"/><stop offset=".3" stop-color="#5d9be3"/><stop offset=".65" stop-color="#397fd6"/><stop offset="1" stop-color="#2a67bf"/></radialGradient>
</defs>
<rect x="50" y="51" width="1" height="765" fill="#f3f3f3"/><rect x="51" y="51" width="1" height="765" fill="#eef6fb"/>
<g fill="url(#shd)">
<ellipse cx="26" cy="87" rx="12.5" ry="3.4"/><ellipse cx="26" cy="136.3" rx="12.5" ry="3.4"/><ellipse cx="26" cy="185.5" rx="12.5" ry="3.4"/><ellipse cx="26" cy="233.5" rx="12.5" ry="3.4"/><ellipse cx="26" cy="283.3" rx="12.5" ry="3.4"/><ellipse cx="26" cy="331.3" rx="12.5" ry="3.4"/><ellipse cx="26" cy="380.5" rx="12.5" ry="3.4"/><ellipse cx="26" cy="429.5" rx="12.5" ry="3.4"/><ellipse cx="26" cy="478.5" rx="12.5" ry="3.4"/><ellipse cx="26" cy="526.5" rx="12.5" ry="3.4"/>
</g>
<!-- 1 shapes -->
<g fill="#2f6fcc">
<circle cx="18.6" cy="79.4" r="4.4"/>
<path d="M21.2,70 V82 A4.05,1.9 0 0 0 29.3,82 V70 Z"/>
<ellipse cx="25.25" cy="70" rx="4.05" ry="1.7" fill="#eef4fb" stroke="#2f6fcc" stroke-width=".6"/>
<path d="M32.2,72 L37,82.7 A4.5,1.3 0 0 1 28,83.3 Z"/>
<path d="M31.3,73.5 L29.6,84 L27.4,83.6 Z" fill="#f4f8fd"/>
<circle cx="16.6" cy="77.4" r=".9" fill="#9fc2ee"/>
</g>
<!-- 2 pencil -->
<g>
<ellipse cx="23.9" cy="131.3" rx="6.6" ry="3" fill="none" stroke="#2f78d4" stroke-width="1.3"/>
<path d="M30.4,115.3 L34.4,117.6 L27.2,129.6 L24.2,131.6 L23.4,127.5 Z" fill="#2f72cf"/>
<path d="M23.6,128.2 L26.6,129.9 L24.2,131.6 Z" fill="#eaf1fb"/>
<path d="M29.6,117 L33.4,119.2" stroke="#8db5ea" stroke-width=".8"/>
</g>
<!-- 3 rounded square -->
<g fill="none">
<path d="M28,182.1 H17.4 V164.7 H35.3 V174" stroke="#2f7bd6" stroke-width="1.5"/>
<path d="M35.3,174 A8.2,8.2 0 0 1 28,182.1" stroke="#9db4cf" stroke-width="1.5" stroke-dasharray="1.2 .8"/>
</g>
<!-- 4 eraser pieces -->
<g>
<polygon points="22.1,221.2 25,218.6 30.6,222.4 30.6,226.4 28,227.6 26.1,225.6 21,230.8 15.9,228.4 15.9,227" fill="#4a8fe3"/>
<polygon points="15.9,227 21,229.2 26.1,224.1 26.1,225.6 21,230.8 15.9,228.4" fill="#2f72cf"/>
<polygon points="15.9,227 22.1,221.2 26.1,224.1 21,229.2" fill="#f3f7fd"/>
<path d="M24.7,218.3 L27.4,219 C29.4,220.4 31,222.6 31.6,225.2 L29.6,226.2 C29,224 27.4,222.2 24.7,221.2 Z" fill="#2f72cf"/>
<polygon points="24.7,218.3 29.8,215.9 31.6,216.4 27.4,219" fill="#5aa0ee"/>
<path d="M27.4,219 L31.6,216.4 C33.6,217 35,218.6 35.3,220.1 L35.6,222.7 L31.6,225.2 C31,222.6 29.4,220.4 27.4,219 Z" fill="#f3f7fd"/>
</g>
<!-- 5 cube -->
<g fill="#2f72cc">
<polygon points="26,262 35.4,266.5 26,271 16.6,266.5"/>
<polygon points="16,267.6 25.4,272.2 25.4,281.6 16,277"/>
<polygon points="36,267.6 26.6,272.2 26.6,281.6 36,277"/>
</g>
<!-- 6 move arrows -->
<g fill="#2f72cc">
<polygon points="26.3,311 30.2,315.4 27.4,315.4 27.4,318 25.2,318 25.2,315.4 22.4,315.4"/>
<polygon points="26.3,329.8 30.2,325.4 27.4,325.4 27.4,322.8 25.2,322.8 25.2,325.4 22.4,325.4"/>
<polygon points="16.5,320.4 21,316.4 21,319.3 23.8,319.3 23.8,321.5 21,321.5 21,324.4"/>
<polygon points="36.1,320.4 31.6,316.4 31.6,319.3 28.8,319.3 28.8,321.5 31.6,321.5 31.6,324.4"/>
<rect x="25.4" y="319.5" width="1.8" height="1.8"/>
</g>
<!-- 7 magnet -->
<g>
<path d="M16.9,370.3 V369 A9.25,9.25 0 0 1 35.4,369 V370.3 H30.2 V369 A4.05,4.05 0 0 0 22.1,369 V370.3 Z" fill="#2f72cc"/>
<rect x="16.9" y="370.3" width="5.2" height="2.7" fill="#0b0b0b"/><rect x="30.2" y="370.3" width="5.2" height="2.7" fill="#0b0b0b"/>
<g fill="#444"><rect x="17.3" y="373.6" width="1.8" height="1.6"/><rect x="20" y="373.6" width="1.8" height="1.6"/><rect x="17.3" y="375.9" width="1.8" height="1.6"/><rect x="20" y="375.9" width="1.8" height="1.6"/><rect x="30.6" y="373.6" width="1.8" height="1.6"/><rect x="33.3" y="373.6" width="1.8" height="1.6"/><rect x="30.6" y="375.9" width="1.8" height="1.6"/><rect x="33.3" y="375.9" width="1.8" height="1.6"/></g>
</g>
<!-- 8 stacked cube -->
<g>
<polygon points="19,413.4 28,410 35.4,413 35.4,421.4 30.6,423.4 30.6,416.6" fill="#2f72cc"/>
<polygon points="19.4,413.4 28,410.2 35,413 27,416.2" fill="#f4f8fd"/>
<polygon points="17,416 24.4,419.6 24.4,428 17,424.2" fill="#3b82dc"/>
<polygon points="24.4,419.6 32.4,416.2 32.4,424.6 24.4,428" fill="#2b69c2"/>
<polygon points="17,416 25,412.8 32.4,416.2 24.4,419.6" fill="#f4f8fd"/>
<polygon points="22,414.2 27,412.2 30,413.6 25,415.6" fill="#c9dcf4"/>
</g>
<!-- 9 measure -->
<g>
<rect x="15.8" y="461" width="20.5" height="8.2" fill="#f4f6f8"/>
<rect x="15.8" y="461" width="1.4" height="8.2" fill="#86aede"/><rect x="34.9" y="461" width="1.4" height="8.2" fill="#86aede"/>
<rect x="15.8" y="469" width="20.5" height="5.4" fill="#4f92e2"/>
<path d="M19,464 H33.4" stroke="#555" stroke-width="1.1"/><circle cx="19" cy="464" r="1" fill="#555"/><circle cx="33.4" cy="464" r="1" fill="#555"/>
</g>
<!-- 10 sphere -->
<circle cx="25.8" cy="516.4" r="9.6" fill="url(#sph10)"/>
</svg>

</div>

<!-- ===================== RIGHT STRIP ===================== -->
<div id="rightstrip">
<div style="position:absolute;left:0;top:308px;width:12px;height:150px;background:#0a98c8"></div>
<div style="position:absolute;left:2px;top:378px;width:0;height:0;border-top:5px solid transparent;border-bottom:5px solid transparent;border-right:8px solid #fff"></div>

</div>

<!-- ===================== FLOATING PANEL ===================== -->
<div id="panel">
<div id="panelhead"></div>
<div id="pin">
<svg width="268" height="35" viewBox="56 55 268 35" style="position:absolute;left:0;top:0">
<defs>
<radialGradient id="pinfo" cx=".45" cy=".3" r=".8"><stop offset="0" stop-color="#ffffff"/><stop offset=".55" stop-color="#f0f0f0"/><stop offset="1" stop-color="#bdbdbd"/></radialGradient>
<linearGradient id="pred" x1="0" y1="0" x2="0" y2="1"><stop offset="0" stop-color="#f3645a"/><stop offset=".5" stop-color="#e8453d"/><stop offset="1" stop-color="#d73a34"/></linearGradient>
<linearGradient id="pgrn" x1="0" y1="0" x2="0" y2="1"><stop offset="0" stop-color="#7cc526"/><stop offset=".5" stop-color="#58a800"/><stop offset="1" stop-color="#4a9600"/></linearGradient>
</defs>
<circle cx="72.8" cy="71.6" r="13.2" fill="url(#pinfo)"/>
<g fill="#2b9cc3"><circle cx="72.9" cy="63.6" r="2"/><path d="M69.8,67.6 H74.6 V77.6 H76.6 V79.4 H69.2 V77.6 H71.4 V69.4 H69.8 Z"/></g>
<circle cx="269.8" cy="71.8" r="13.6" fill="url(#pred)"/>
<ellipse cx="269.8" cy="65" rx="9" ry="4.6" fill="#ff9a90" opacity=".35"/>
<path d="M263.3,65.3 L276.3,78.3 M276.3,65.3 L263.3,78.3" stroke="#fff" stroke-width="2.5" stroke-linecap="round"/>
<circle cx="305.7" cy="71.8" r="13.6" fill="url(#pgrn)"/>
<ellipse cx="304.5" cy="65" rx="9" ry="4.6" fill="#b6e86a" opacity=".4"/>
<path d="M296.4,74 L303.6,79.4 L314.2,63.6 L303.2,75.2 L298.4,71.4 Z" fill="#fff" stroke="#fff" stroke-width="1" stroke-linejoin="round"/>
</svg>
<svg width="140" height="36" viewBox="122 99 140 36" style="position:absolute;left:66px;top:44px">
<defs>
<linearGradient id="obg" x1="0" y1="0" x2="0" y2="1"><stop offset="0" stop-color="#e6eaeb"/><stop offset="1" stop-color="#cdd4d6"/></linearGradient>
<linearGradient id="oor" x1="0" y1="0" x2="0" y2="1"><stop offset="0" stop-color="#fdbd78"/><stop offset=".5" stop-color="#f89b3c"/><stop offset="1" stop-color="#fcb869"/></linearGradient>
<radialGradient id="oshd" cx=".5" cy=".5" r=".5"><stop offset="0" stop-color="#6f797d" stop-opacity=".85"/><stop offset=".5" stop-color="#8a9498" stop-opacity=".5"/><stop offset="1" stop-color="#9aa4a8" stop-opacity="0"/></radialGradient>
</defs>
<g stroke="#a6b3b8" stroke-width="1">
<rect x="124.5" y="101.5" width="30.5" height="31" rx="2.5" fill="url(#obg)"/>
<rect x="157.5" y="101.5" width="30.5" height="31" rx="2.5" fill="url(#obg)"/>
<rect x="190.5" y="101.5" width="30.5" height="31" rx="2.5" fill="url(#oor)" stroke="#f5a11e"/>
<rect x="223.5" y="101.5" width="30.5" height="31" rx="2.5" fill="url(#obg)"/>
</g>
<g fill="url(#oshd)"><ellipse cx="139.7" cy="126.6" rx="11" ry="3.4"/><ellipse cx="172.8" cy="125.4" rx="11" ry="3.4"/><ellipse cx="238.8" cy="125.4" rx="11" ry="3.4"/></g>
<ellipse cx="205.8" cy="125.4" rx="11" ry="3.2" fill="#d5721a" opacity=".5"/>
<!-- b1 -->
<polygon points="139.6,108.3 148.8,117.3 139.6,126.3 130.4,117.3" fill="#4a86c8"/>
<polygon points="139.6,106.4 148.8,115.4 139.6,124.4 130.4,115.4" fill="#ffffff"/>
<!-- b2 -->
<polygon points="168.4,109.3 175,115.8 168.4,122.3 161.8,115.8" fill="#4a86c8"/><polygon points="177.4,109.3 184,115.8 177.4,122.3 170.8,115.8" fill="#4a86c8"/>
<polygon points="168.4,107.8 175,114.3 168.4,120.8 161.8,114.3" fill="#fff"/><polygon points="177.4,107.8 184,114.3 177.4,120.8 170.8,114.3" fill="#fff"/>
<!-- b3 -->
<polygon points="210.6,107.8 217.4,114.5 210.6,121.2 203.8,114.5" fill="#7db9f2"/>
<polygon points="201.6,109.3 208.2,115.8 201.6,122.3 195,115.8" fill="#4a86c8"/>
<polygon points="201.6,107.8 208.2,114.3 201.6,120.8 195,114.3" fill="#fff"/>
<!-- b4 -->
<polygon points="234.8,109.3 241.4,115.8 234.8,122.3 228.2,115.8" fill="#4a86c8"/><polygon points="243.6,109.3 250.2,115.8 243.6,122.3 237,115.8" fill="#4a86c8"/>
<polygon points="234.8,107.8 241.4,114.3 234.8,120.8 228.2,114.3" fill="#fff"/><polygon points="243.6,107.8 250.2,114.3 243.6,120.8 237,114.3" fill="#fff" stroke="#9dbfe6" stroke-width=".5"/>
<polygon points="239.2,111.4 241.8,114 239.2,116.6 236.6,114" fill="#2f6fcc"/>
</svg>
<div class="lbl" style="top:88px">轮廓 P</div>
<div class="lbl" style="top:115.5px">拉伸类型</div>
<div class="lbl" style="top:143.5px">方向</div>
<div class="lbl" style="top:174px">子区域</div>
<div class="inp" style="left:77px;top:85px;width:179px;height:21px;line-height:19px">f46</div>
<div class="inp" style="left:76px;top:113.5px;width:180.5px;height:19px;line-height:17px;padding-left:3px">1 边<span style="position:absolute;right:0;top:0;width:15px;height:17px;background:#c2c2c2;border-left:1px solid #b0b0b0"></span><span style="position:absolute;right:5px;top:7px;width:0;height:0;border-left:3px solid transparent;border-right:3px solid transparent;border-top:3.5px solid #333"></span></div>
<div class="inp" style="left:77px;top:140px;width:134px;height:21.6px"></div>
<div class="inp" style="left:77px;top:170px;width:134px;height:21.6px"></div>
<svg width="16" height="16" viewBox="0 0 16 16" style="position:absolute;left:220px;top:143px"><path d="M5.2,1.2 H10.8 V6 H14 L8,12 L2,6 H5.2 Z" fill="#f6b32e" stroke="#b39a3a" stroke-width=".9"/><path d="M6.4,2.4 H9.6 V7 L8,9.4 L6.4,7 Z" fill="#fbe08a"/><rect x="1.5" y="13.3" width="13" height="1.2" fill="#9aaa4a"/></svg>
<svg width="16" height="16" viewBox="0 0 16 16" style="position:absolute;left:220px;top:173px"><path d="M5.2,1.2 H10.8 V6 H14 L8,12 L2,6 H5.2 Z" fill="#f6b32e" stroke="#b39a3a" stroke-width=".9"/><path d="M6.4,2.4 H9.6 V7 L8,9.4 L6.4,7 Z" fill="#fbe08a"/><rect x="1.5" y="13.3" width="13" height="1.2" fill="#9aaa4a"/></svg>

</div>
</div>

<!-- ===================== BOTTOM BAR ===================== -->
<div id="botgap"></div>
<div id="bottombar">
<svg width="1440" height="52" viewBox="0 818 1440 52" style="position:absolute;left:0;top:-1px">
<defs>
<radialGradient id="bshd" cx=".5" cy=".5" r=".5"><stop offset="0" stop-color="#767d7d" stop-opacity=".9"/><stop offset=".6" stop-color="#8c9393" stop-opacity=".5"/><stop offset="1" stop-color="#aab0b0" stop-opacity="0"/></radialGradient>
<linearGradient id="ringP" x1="0" y1="0" x2="1" y2="1"><stop offset="0" stop-color="#3fd0ee"/><stop offset="1" stop-color="#128fb0"/></linearGradient>
</defs>
<!-- P button -->
<circle cx="18.9" cy="844" r="13.4" fill="#7d8d92" opacity=".55"/>
<circle cx="19.5" cy="843.3" r="12.6" fill="#dfe4e4" stroke="url(#ringP)" stroke-width="2.2"/>
<circle cx="19.5" cy="843.3" r="11.2" fill="none" stroke="#f4ffff" stroke-width=".8" opacity=".9"/>
<text x="13.6" y="849.9" font-family="Liberation Sans,sans-serif" font-weight="bold" font-size="17.5" fill="#1a99b8">P</text>
<polygon points="40.9,857 47,857 43.95,861" fill="#2e2e2e"/>
<!-- shadows -->
<g fill="url(#bshd)"><ellipse cx="551" cy="853.6" rx="12" ry="3.4"/><ellipse cx="599.5" cy="850.3" rx="12" ry="3.4"/><ellipse cx="649" cy="853.6" rx="12" ry="3.4"/><ellipse cx="698" cy="852.6" rx="12" ry="3.4"/><ellipse cx="746.5" cy="853.3" rx="12" ry="3.4"/><ellipse cx="796" cy="853" rx="12" ry="3.4"/></g>
<!-- A layout -->
<rect x="542.4" y="833.5" width="17.6" height="16.8" fill="#fff" stroke="#3f7fd0" stroke-width="1.3"/>
<path d="M550.6,833.5 V842.2 H560" fill="none" stroke="#3f7fd0" stroke-width="1.3"/>
<!-- B eye -->
<path d="M589,841 C593,836.4 597,835.2 599.8,835.2 C602.6,835.2 606.6,836.4 610.6,841 C606.6,845.6 602.6,846.8 599.8,846.8 C597,846.8 593,845.6 589,841 Z" fill="#2f6fcc"/>
<circle cx="599.8" cy="841" r="3.9" fill="#eef3fb"/><circle cx="599.8" cy="841" r="2" fill="#2f6fcc"/>
<!-- C wire cube -->
<polygon points="648.8,832.9 657.8,837.6 657.8,848.2 648.8,852.9 639.8,848.2 639.8,837.6" fill="#fbfdff" stroke="#5b92dc" stroke-width="1.1"/>
<path d="M639.8,837.6 L648.8,842.6 L657.8,837.6 M648.8,842.6 V852.9" fill="none" stroke="#5b92dc" stroke-width="1"/>
<path d="M648.8,832.9 V842.6 M639.8,848.2 L648.8,842.6 L657.8,848.2" fill="none" stroke="#c4d8f2" stroke-width=".9"/>
<!-- D solid cube -->
<polygon points="697.8,834.6 708,838.4 697.8,842.4 687.6,838.4" fill="#aac7ec"/>
<polygon points="687.6,838.4 697.8,842.4 697.8,850.4 687.6,846" fill="#9dbde8"/>
<polygon points="708,838.4 697.8,842.4 697.8,850.4 708,846" fill="#88addb"/>
<!-- E magnifier -->
<path d="M749,845.2 L755.8,851.6" stroke="#2f72cf" stroke-width="2.6" stroke-linecap="round"/>
<circle cx="744.3" cy="839.5" r="5.8" fill="#e9f0fa" stroke="#2f72cf" stroke-width="1.9"/>
<path d="M744.3,836.2 L747.2,837.7 V841.2 L744.3,842.8 L741.4,841.2 V837.7 Z M741.4,837.7 L744.3,839.2 L747.2,837.7 M744.3,839.2 V842.8" fill="none" stroke="#8fb3e6" stroke-width=".8"/>
<!-- F printer -->
<rect x="791.6" y="834.3" width="8.6" height="6" fill="#f2f6fc" stroke="#3b7cd6" stroke-width="1.1"/>
<rect x="788" y="839.4" width="15.6" height="7.4" rx="1.6" fill="#2f72cf"/>
<rect x="791.2" y="843.2" width="9.4" height="6.6" fill="#f2f6fc" stroke="#3b7cd6" stroke-width="1.1"/>
<rect x="793" y="845.2" width="4.6" height="1" fill="#6b9fe3"/><rect x="793" y="847.2" width="3.2" height="1" fill="#6b9fe3"/>
<circle cx="800.8" cy="841.4" r=".9" fill="#dfeafa"/><rect x="792.6" y="840.6" width="3" height=".9" fill="#9cc0ef"/>
<!-- select -->
<rect x="821.5" y="834.4" width="92" height="19" fill="#fbfbfb" stroke="#8e8e8e" stroke-width="1"/>
<rect x="898.4" y="835" width="14.6" height="17.9" fill="#c7c7c7"/>
<polygon points="902.6,840.6 908.2,840.6 905.4,844" fill="#333"/>
<!-- M button -->
<circle cx="1406.5" cy="842.6" r="13.4" fill="#7d8d92" opacity=".5"/>
<circle cx="1407" cy="841.9" r="12.6" fill="#dfe4e4" stroke="url(#ringP)" stroke-width="2.2"/>
<circle cx="1407" cy="841.9" r="11.2" fill="none" stroke="#f4ffff" stroke-width=".8" opacity=".9"/>
<text x="1399.8" y="848.4" font-family="Liberation Sans,sans-serif" font-weight="bold" font-size="17" fill="#1a99b8" textLength="14.4" lengthAdjust="spacingAndGlyphs">M</text>
</svg>

</div>
<div id="taskbar"></div>
<div style="position:absolute;left:0;top:870px;width:94px;height:4px;background:#3b9a3b"></div>
<div style="position:absolute;left:4px;top:871px;width:84px;height:3px;background:#7fc97f;opacity:.7"></div>
<div style="position:absolute;left:1309px;top:870px;width:131px;height:4px;background:#12a6ee"></div>
<svg width="190" height="32" viewBox="1250 842 190 32" style="position:absolute;left:1250px;top:842px">
<rect x="1272.5" y="847" width="166.5" height="22.4" rx="3" fill="#f5f8fc" stroke="#b5c7da" stroke-width="1"/>
<g transform="rotate(-11 1269 856.5)"><rect x="1257" y="845" width="24.5" height="23.5" rx="3.5" fill="#f14c1b"/>
<path d="M1276.4,851.6 C1271,849.6 1262.6,850 1262.2,853.6 C1261.8,857.6 1276,856 1276.4,860.2 C1276.8,864.2 1267,864.6 1261.4,862.4" fill="none" stroke="#fff" stroke-width="3.1" stroke-linecap="round"/></g>
<g fill="none" stroke="#1f6fd0" stroke-width="2"><rect x="1290.3" y="854.4" width="11.6" height="6.4"/><path d="M1296.1,851 V865"/></g>
<path d="M1320.6,851.6 C1326.6,855.6 1326,863.4 1318.8,865 C1316,865.5 1313.4,864.8 1312,863 C1318,862.6 1321.6,858 1320.6,851.6 Z" fill="#1f6fd0"/>
<circle cx="1335.8" cy="855" r="1.7" fill="none" stroke="#1f6fd0" stroke-width="1.3"/>
<path d="M1343.6,858 C1346.4,858 1346.8,862.8 1342,864.6 C1343.6,862.8 1343.4,861.8 1342,861.4 C1340.8,859.8 1342,858 1343.6,858 Z" fill="#1f6fd0"/>
<rect x="1354.4" y="852.8" width="15" height="10.2" rx="1.6" fill="none" stroke="#1f6fd0" stroke-width="1.5"/>
<g fill="#1f6fd0"><rect x="1356.8" y="855" width="1.7" height="1.6"/><rect x="1359.6" y="855" width="1.7" height="1.6"/><rect x="1362.4" y="855" width="1.7" height="1.6"/><rect x="1365.2" y="855" width="1.7" height="1.6"/><rect x="1356.8" y="857.6" width="1.7" height="1.6"/><rect x="1359.6" y="857.6" width="1.7" height="1.6"/><rect x="1362.4" y="857.6" width="1.7" height="1.6"/><rect x="1365.2" y="857.6" width="1.7" height="1.6"/><rect x="1358.4" y="860.2" width="7" height="1.4"/></g>
<g fill="#b9c1cf"><circle cx="1383.8" cy="854.2" r="3"/><path d="M1378,864.4 C1378,859.6 1380.6,858 1383.8,858 C1387,858 1389.6,859.6 1389.6,864.4 Z"/><path d="M1377.6,861 L1381,862.4 L1380,864.8 Z"/></g>
<text x="1384.6" y="866" font-family="Liberation Sans,sans-serif" font-weight="bold" font-size="8" fill="#fff" stroke="#aab4c4" stroke-width=".5">14</text>
<path d="M1402.6,852.2 L1404.2,852.2 C1405,853.6 1407,853.6 1407.8,852.2 L1409.4,852.2 L1413.2,855.2 L1411.2,858 L1409.6,857 V864.6 H1402.4 V857 L1400.8,858 L1398.8,855.2 Z" fill="#1f6fd0"/>
<path d="M1431.6,851.4 C1429,851 1426.6,853.4 1427.6,856.4 L1421.6,862.6 C1420.6,863.8 1422.4,865.6 1423.6,864.6 L1429.8,858.4 C1432.8,859.2 1435.2,856.8 1434.6,854.2 L1432,856.6 L1429.8,856 L1429.2,853.8 Z" fill="#1f6fd0"/>
</svg>
<!-- orange badge -->
<div style="position:absolute;left:1415px;top:696px;width:13px;height:62px;background:#4788b4;opacity:.75"></div>
<svg width="24" height="56" viewBox="1416 694 24 56" style="position:absolute;left:1416px;top:694px">
<circle cx="1443.4" cy="724" r="23" fill="#6b6b6b" opacity=".35"/>
<circle cx="1443.2" cy="722.5" r="22.6" fill="#f8f8f8"/>
<circle cx="1443.2" cy="722.5" r="20.4" fill="#f5832c"/>
<text x="1426.8" y="726.2" font-family="Liberation Sans,sans-serif" font-weight="bold" font-size="11.5" fill="#fff">67</text>
</svg>


</div>
</body>
</html>
